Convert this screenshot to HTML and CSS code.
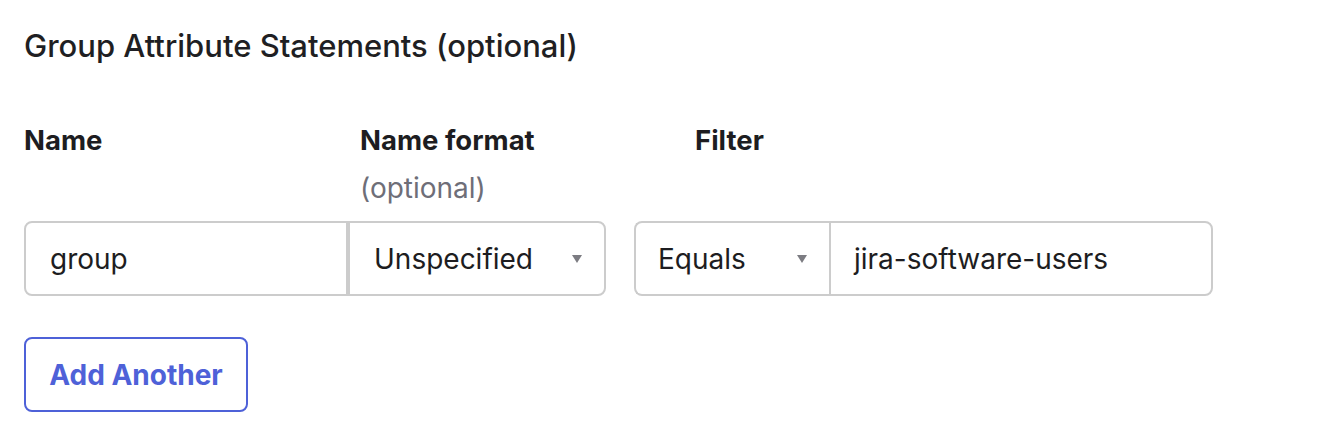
FILE: index.html
```html
<!DOCTYPE html>
<html>
<head>
<meta charset="utf-8">
<link rel="stylesheet" href="styles.css">
</head>
<body>
<section class="panel">
  <h2 class="title">Group Attribute Statements (optional)</h2>
  <div class="labels">
    <div class="label">Name</div>
    <div class="label">Name format<span class="hint">(optional)</span></div>
    <div class="label">Filter</div>
  </div>
  <div class="row">
    <div class="group">
      <div class="field name-field">group</div>
      <div class="field select fmt">Unspecified<span class="caret"></span></div>
    </div>
    <div class="group group2">
      <div class="field select eq">Equals<span class="caret"></span></div>
      <div class="field value">jira-software-users</div>
    </div>
  </div>
  <button class="add">Add Another</button>
</section>
</body>
</html>
```
FILE: styles.css
```css
html, body {
  margin: 0;
  padding: 0;
  background: #ffffff;
}
body {
  font-family: Inter, "Noto Sans", sans-serif;
  color: #1d1d21;
}
.panel {
  padding: 24px 24px 0 24px;
}
.title {
  margin: 0;
  font-size: 31px;
  font-weight: 500;
  line-height: 44px;
  color: #1f1f23;
}
.labels {
  display: grid;
  grid-template-columns: 336px 335px 336px;
  margin-top: 52px;
}
.label {
  font-size: 27.5px;
  font-weight: 700;
  line-height: 40px;
  display: flex;
  flex-direction: column;
}
.hint {
  font-size: 28px;
  font-weight: 400;
  color: #6e6e78;
  margin-top: 8px;
}
.row {
  display: flex;
  gap: 28px;
  margin-top: 13px;
}
.group {
  display: flex;
  height: 75px;
  box-sizing: border-box;
}
.field {
  box-sizing: border-box;
  height: 75px;
  border: 2px solid #cccccc;
  display: flex;
  align-items: center;
  font-size: 28px;
  padding-left: 24px;
}
.name-field {
  width: 324px;
  border-radius: 8px 0 0 8px;
}
.fmt {
  width: 258px;
  border-radius: 0 8px 8px 0;
}
.eq {
  width: 195px;
  border-right: none;
  border-radius: 8px 0 0 8px;
  padding-left: 22px;
}
.value {
  width: 384px;
  border-radius: 0 8px 8px 0;
  padding-left: 23px;
}
.select {
  justify-content: space-between;
  padding-right: 22px;
}
.caret {
  width: 0;
  height: 0;
  border-left: 5px solid transparent;
  border-right: 5px solid transparent;
  border-top: 8px solid #7c7c82;
}
.add {
  display: block;
  margin-top: 41px;
  width: 224px;
  height: 75px;
  box-sizing: border-box;
  border: 2px solid #4e61d8;
  border-radius: 8px;
  background: #fff;
  color: #4e61d8;
  font-family: Inter, "Noto Sans", sans-serif;
  font-size: 28px;
  font-weight: 700;
  padding: 0;
}
```
